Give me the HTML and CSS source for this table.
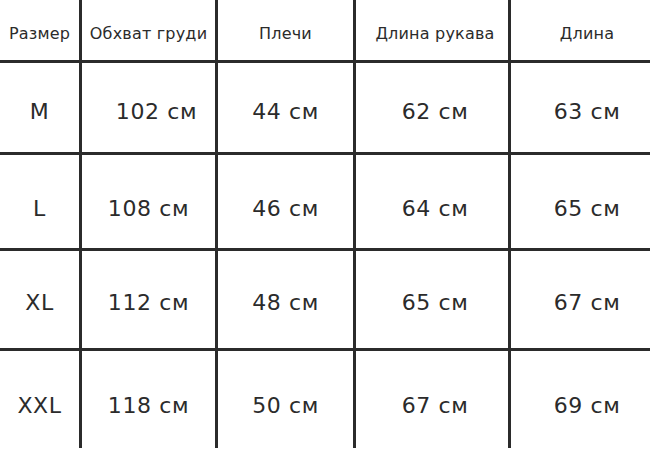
FILE: index.html
```html
<!DOCTYPE html>
<html lang="ru">
<head>
<meta charset="utf-8">
<title>Таблица размеров</title>
<link rel="stylesheet" href="styles.css">
</head>
<body>
<div class="chart">
  <div class="cell head c1">Размер</div>
  <div class="cell head c2">Обхват груди</div>
  <div class="cell head c3">Плечи</div>
  <div class="cell head c4">Длина рукава</div>
  <div class="cell head c5">Длина</div>

  <div class="cell data c1 r1">M</div>
  <div class="cell data c2 r1 shift">102 см</div>
  <div class="cell data c3 r1">44 см</div>
  <div class="cell data c4 r1">62 см</div>
  <div class="cell data c5 r1">63 см</div>

  <div class="cell data c1 r2">L</div>
  <div class="cell data c2 r2">108 см</div>
  <div class="cell data c3 r2">46 см</div>
  <div class="cell data c4 r2">64 см</div>
  <div class="cell data c5 r2">65 см</div>

  <div class="cell data c1 r3">XL</div>
  <div class="cell data c2 r3">112 см</div>
  <div class="cell data c3 r3">48 см</div>
  <div class="cell data c4 r3">65 см</div>
  <div class="cell data c5 r3">67 см</div>

  <div class="cell data c1 r4">XXL</div>
  <div class="cell data c2 r4">118 см</div>
  <div class="cell data c3 r4">50 см</div>
  <div class="cell data c4 r4">67 см</div>
  <div class="cell data c5 r4">69 см</div>
</div>
</body>
</html>
```
FILE: styles.css
```css
html, body {
  margin: 0;
  padding: 0;
  background: #ffffff;
}

body {
  width: 650px;
  height: 450px;
  overflow: hidden;
  font-family: "DejaVu Sans", "Liberation Sans", sans-serif;
  color: #2b2b2b;
}

.chart {
  display: grid;
  grid-template-columns: 79px 133px 135px 152px 139px;
  grid-template-rows: 60px 89px 93px 97px 97px;
  gap: 3px;
  background: #2b2b2b;
  width: 650px;
  height: 448px;
}

.cell {
  background: #ffffff;
  display: flex;
  align-items: center;
  justify-content: center;
  white-space: nowrap;
  box-sizing: border-box;
}

.head {
  font-size: 16px;
  padding-top: 7px;
  letter-spacing: 0.2px;
}

.data {
  font-size: 22px;
  letter-spacing: 0.6px;
}

.r1 { padding-top: 7px; }
.r2 { padding-top: 13px; }
.r3 { padding-top: 5px; }
.r4 { padding-top: 11px; }

.c4 { padding-left: 6px; }
.c5 { padding-left: 13px; }
.shift { padding-left: 16px; }
```
